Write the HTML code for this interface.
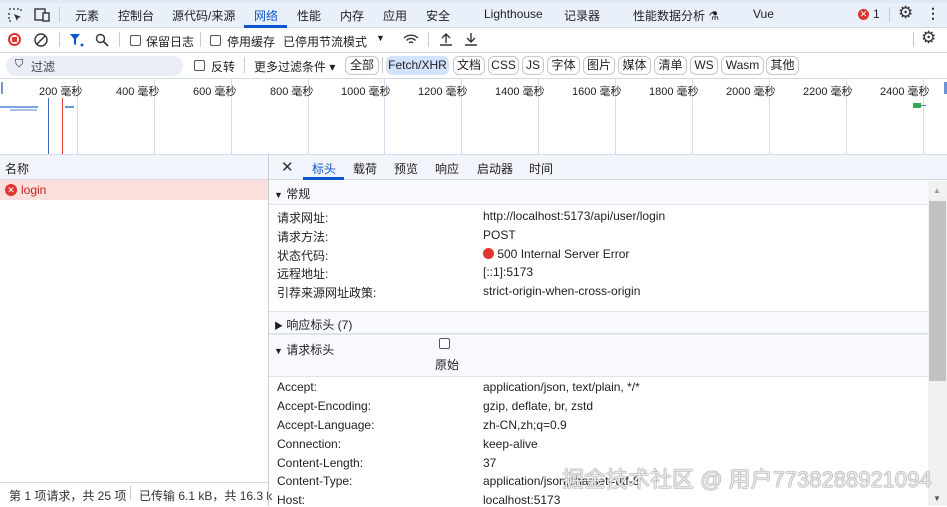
<!DOCTYPE html>
<html><head><meta charset="utf-8"><style>
*{box-sizing:border-box;margin:0;padding:0}
body{width:947px;height:506px;overflow:hidden;background:#fff;font-family:"Liberation Sans","Noto Sans CJK SC",sans-serif;font-size:12px;color:#1f1f1f;position:relative}
.a{position:absolute;white-space:nowrap}
.cb{position:absolute;width:11px;height:11px;border:1px solid #555;border-radius:2px;background:#fff}
.chip{position:absolute;top:56px;height:19px;border:1px solid #c4c7cc;border-radius:6px;line-height:17px;font-size:12px;text-align:center}
.g{position:absolute;top:78px;height:76px;width:1px;background:#d6dff0}
.tl{position:absolute;top:83px;font-size:11px}
.lb{position:absolute;left:277px}
.vl{position:absolute;left:483px}
</style></head><body>
<div class="a" style="left:0;top:0;width:947px;height:28px;background:#eaf0fa;border-bottom:1px solid #d3dbe8"></div>
<div class="a" style="left:0;top:0;width:947px;height:3px;background:#dfe8f7"></div>
<svg class="a" style="left:8px;top:8px" width="14" height="14"><path d="M1 1h2M5 1h2M1 5v2M1 9v2M1 13h2M9 1h2M13 1v2" stroke="#333" stroke-width="1.3" fill="none"/><path d="M6 6l7 3-3 1-1 3z" fill="#333"/></svg>
<svg class="a" style="left:34px;top:8px" width="16" height="14"><rect x="1" y="1" width="10" height="11" fill="none" stroke="#333" stroke-width="1.4"/><rect x="9" y="5" width="6" height="8" fill="#eaf0fa" stroke="#333" stroke-width="1.4"/></svg>
<div class="a" style="left:59px;top:7px;width:1px;height:15px;background:#c7ccd4"></div>
<div class="a" style="left:75px;top:7px">元素</div>
<div class="a" style="left:118px;top:7px">控制台</div>
<div class="a" style="left:172px;top:7px">源代码/来源</div>
<div class="a" style="left:254px;top:7px;color:#0b57d0">网络</div>
<div class="a" style="left:244px;top:25px;width:43px;height:3px;background:#0b57d0"></div>
<div class="a" style="left:297px;top:7px">性能</div>
<div class="a" style="left:340px;top:7px">内存</div>
<div class="a" style="left:383px;top:7px">应用</div>
<div class="a" style="left:426px;top:7px">安全</div>
<div class="a" style="left:484px;top:7px">Lighthouse</div>
<div class="a" style="left:564px;top:7px">记录器</div>
<div class="a" style="left:633px;top:7px">性能数据分析 ⚗</div>
<div class="a" style="left:753px;top:7px">Vue</div>
<div class="a" style="left:858px;top:9px;width:11px;height:11px;border-radius:50%;background:#dc362e;color:#fff;font-size:9px;line-height:11px;text-align:center">✕</div>
<div class="a" style="left:873px;top:7px">1</div>
<div class="a" style="left:889px;top:7px;width:1px;height:15px;background:#c7ccd4"></div>
<div class="a" style="left:898px;top:3px;font-size:17px;color:#333">⚙</div>
<div class="a" style="left:926px;top:5px;font-size:14px;font-weight:bold;color:#333">⋮</div>
<div class="a" style="left:0;top:52px;width:947px;height:1px;background:#d3dbe8"></div>
<div class="a" style="left:8px;top:33px;width:13px;height:13px;border-radius:50%;border:2px solid #dc362e"></div>
<div class="a" style="left:12px;top:37px;width:5px;height:5px;background:#dc362e"></div>
<svg class="a" style="left:34px;top:33px" width="14" height="14"><circle cx="7" cy="7" r="6" fill="none" stroke="#333" stroke-width="1.4"/><path d="M3 11L11 3" stroke="#333" stroke-width="1.4"/></svg>
<div class="a" style="left:59px;top:32px;width:1px;height:15px;background:#c7ccd4"></div>
<svg class="a" style="left:69px;top:33px" width="16" height="14"><path d="M1 1h10l-4 5v6l-2-1V6z" fill="#0b57d0"/><circle cx="13" cy="12" r="1.5" fill="#0b57d0"/></svg>
<svg class="a" style="left:95px;top:33px" width="14" height="14"><circle cx="5.5" cy="5.5" r="4" fill="none" stroke="#333" stroke-width="1.4"/><path d="M8.5 8.5L13 13" stroke="#333" stroke-width="1.6"/></svg>
<div class="a" style="left:119px;top:32px;width:1px;height:15px;background:#c7ccd4"></div>
<div class="cb" style="left:130px;top:35px"></div><div class="a" style="left:146px;top:33px">保留日志</div>
<div class="a" style="left:200px;top:32px;width:1px;height:15px;background:#c7ccd4"></div>
<div class="cb" style="left:210px;top:35px"></div><div class="a" style="left:227px;top:33px">停用缓存</div>
<div class="a" style="left:283px;top:33px">已停用节流模式</div>
<div class="a" style="left:376px;top:33px;font-size:9px">▼</div>
<svg class="a" style="left:403px;top:33px" width="16" height="13"><path d="M1 5a10 10 0 0 1 14 0M3.5 7.5a6 6 0 0 1 9 0M6 10a2.5 2.5 0 0 1 4 0" fill="none" stroke="#333" stroke-width="1.4"/></svg>
<div class="a" style="left:428px;top:32px;width:1px;height:15px;background:#c7ccd4"></div>
<svg class="a" style="left:439px;top:32px" width="14" height="14"><path d="M7 11V2M3 6l4-4 4 4M1 13h12" fill="none" stroke="#333" stroke-width="1.4"/></svg>
<svg class="a" style="left:464px;top:32px" width="14" height="14"><path d="M7 1v9M3 6l4 4 4-4M1 13h12" fill="none" stroke="#333" stroke-width="1.4"/></svg>
<div class="a" style="left:913px;top:32px;width:1px;height:15px;background:#c7ccd4"></div>
<div class="a" style="left:921px;top:28px;font-size:17px;color:#333">⚙</div>
<div class="a" style="left:0;top:78px;width:947px;height:1px;background:#d3dbe8"></div>
<div class="a" style="left:6px;top:56px;width:177px;height:20px;border-radius:10px;background:#e9eef6"></div>
<div class="a" style="left:15px;top:58px;font-size:11px">⛉</div>
<div class="a" style="left:31px;top:58px;color:#444">过滤</div>
<div class="cb" style="left:194px;top:60px"></div><div class="a" style="left:211px;top:58px">反转</div>
<div class="a" style="left:244px;top:57px;width:1px;height:16px;background:#c7ccd4"></div>
<div class="a" style="left:254px;top:58px">更多过滤条件 ▾</div>
<div class="chip" style="left:345px;width:34px">全部</div>
<div class="a" style="left:382px;top:57px;width:1px;height:16px;background:#c7ccd4"></div>
<div class="chip" style="left:386px;width:63px;background:#d3e3fd;border-color:#d3e3fd">Fetch/XHR</div>
<div class="chip" style="left:453px;width:32px">文档</div>
<div class="chip" style="left:488px;width:31px">CSS</div>
<div class="chip" style="left:522px;width:22px">JS</div>
<div class="chip" style="left:547px;width:33px">字体</div>
<div class="chip" style="left:583px;width:32px">图片</div>
<div class="chip" style="left:618px;width:33px">媒体</div>
<div class="chip" style="left:654px;width:33px">清单</div>
<div class="chip" style="left:690px;width:28px">WS</div>
<div class="chip" style="left:721px;width:43px">Wasm</div>
<div class="chip" style="left:766px;width:33px">其他</div>
<div class="a" style="left:0;top:154px;width:947px;height:1px;background:#d3dbe8"></div>
<div class="g" style="left:77px"></div><div class="g" style="left:154px"></div><div class="g" style="left:231px"></div><div class="g" style="left:308px"></div><div class="g" style="left:384px"></div><div class="g" style="left:461px"></div><div class="g" style="left:538px"></div><div class="g" style="left:615px"></div><div class="g" style="left:692px"></div><div class="g" style="left:769px"></div><div class="g" style="left:846px"></div><div class="g" style="left:923px"></div>
<div class="tl" style="left:39px">200 毫秒</div><div class="tl" style="left:116px">400 毫秒</div><div class="tl" style="left:193px">600 毫秒</div><div class="tl" style="left:270px">800 毫秒</div><div class="tl" style="left:341px">1000 毫秒</div><div class="tl" style="left:418px">1200 毫秒</div><div class="tl" style="left:495px">1400 毫秒</div><div class="tl" style="left:572px">1600 毫秒</div><div class="tl" style="left:649px">1800 毫秒</div><div class="tl" style="left:726px">2000 毫秒</div><div class="tl" style="left:803px">2200 毫秒</div><div class="tl" style="left:880px">2400 毫秒</div>
<div class="a" style="left:1px;top:82px;width:2px;height:12px;background:#6c93d8"></div>
<div class="a" style="left:0;top:106px;width:38px;height:2px;background:#7ba3e6"></div>
<div class="a" style="left:10px;top:109px;width:27px;height:2px;background:#a8c2ee"></div>
<div class="a" style="left:48px;top:98px;width:1px;height:56px;background:#3e6bbd"></div>
<div class="a" style="left:62px;top:98px;width:1px;height:56px;background:#d9453b"></div>
<div class="a" style="left:65px;top:106px;width:9px;height:2px;background:#6c93d8"></div>
<div class="a" style="left:913px;top:103px;width:8px;height:5px;background:#34a853"></div>
<div class="a" style="left:921px;top:105px;width:5px;height:1px;background:#4a86e8"></div>
<div class="a" style="left:944px;top:82px;width:3px;height:12px;background:#6c93d8"></div>
<div class="a" style="left:0;top:155px;width:268px;height:25px;background:#f1f4fa;border-bottom:1px solid #d3dbe8"></div>
<div class="a" style="left:5px;top:160px">名称</div>
<div class="a" style="left:0;top:180px;width:268px;height:20px;background:#fce0de"></div>
<div class="a" style="left:5px;top:184px;width:12px;height:12px;border-radius:50%;background:#dc362e;color:#fff;font-size:9px;line-height:12px;text-align:center">✕</div>
<div class="a" style="left:21px;top:183px;color:#c5221f">login</div>
<div class="a" style="left:0;top:482px;width:268px;height:1px;background:#d3dbe8"></div>
<div class="a" style="left:9px;top:487px;color:#333">第 1 项请求，共 25 项</div>
<div class="a" style="left:130px;top:486px;width:1px;height:14px;background:#c7ccd4"></div>
<div class="a" style="left:139px;top:487px;color:#333">已传输 6.1 kB，共 16.3 k</div>
<div class="a" style="left:268px;top:155px;width:1px;height:351px;background:#c7ccd4"></div>
<div class="a" style="left:269px;top:155px;width:678px;height:25px;background:#f1f4fa;border-bottom:1px solid #d3dbe8"></div>
<div class="a" style="left:281px;top:158px;font-size:15px;color:#333">✕</div>
<div class="a" style="left:312px;top:160px;color:#0b57d0">标头</div>
<div class="a" style="left:303px;top:177px;width:41px;height:3px;background:#0b57d0"></div>
<div class="a" style="left:353px;top:160px">载荷</div>
<div class="a" style="left:394px;top:160px">预览</div>
<div class="a" style="left:435px;top:160px">响应</div>
<div class="a" style="left:477px;top:160px">启动器</div>
<div class="a" style="left:529px;top:160px">时间</div>
<div class="a" style="left:269px;top:181px;width:659px;height:24px;background:#f8f9fc;border-bottom:1px solid #dde3ee"></div>
<div class="a" style="left:274px;top:185px"><span style="font-size:9px">▼</span> 常规</div>
<div class="lb" style="top:209px">请求网址:</div><div class="vl" style="top:209px">http://localhost:5173/api/user/login</div>
<div class="lb" style="top:228px">请求方法:</div><div class="vl" style="top:228px">POST</div>
<div class="lb" style="top:247px">状态代码:</div><div class="vl" style="top:247px"><span style="display:inline-block;width:11px;height:11px;border-radius:50%;background:#dc362e;vertical-align:-1px"></span> 500 Internal Server Error</div>
<div class="lb" style="top:265px">远程地址:</div><div class="vl" style="top:265px">[::1]:5173</div>
<div class="lb" style="top:284px">引荐来源网址政策:</div><div class="vl" style="top:284px">strict-origin-when-cross-origin</div>
<div class="a" style="left:269px;top:311px;width:659px;height:24px;background:#f8f9fc;border-top:1px solid #dde3ee;border-bottom:2px solid #dde3ee"></div>
<div class="a" style="left:274px;top:316px"><span style="font-size:9px">▶</span> 响应标头 (7)</div>
<div class="a" style="left:269px;top:336px;width:659px;height:41px;background:#f8f9fc;border-bottom:1px solid #dde3ee"></div>
<div class="a" style="left:274px;top:341px"><span style="font-size:9px">▼</span> 请求标头</div>
<div class="cb" style="left:439px;top:338px"></div>
<div class="a" style="left:435px;top:356px">原始</div>
<div class="lb" style="top:380px">Accept:</div><div class="vl" style="top:380px">application/json, text/plain, */*</div>
<div class="lb" style="top:399px">Accept-Encoding:</div><div class="vl" style="top:399px">gzip, deflate, br, zstd</div>
<div class="lb" style="top:418px">Accept-Language:</div><div class="vl" style="top:418px">zh-CN,zh;q=0.9</div>
<div class="lb" style="top:437px">Connection:</div><div class="vl" style="top:437px">keep-alive</div>
<div class="lb" style="top:456px">Content-Length:</div><div class="vl" style="top:456px">37</div>
<div class="lb" style="top:474px">Content-Type:</div><div class="vl" style="top:474px">application/json;charset=utf-8</div>
<div class="lb" style="top:493px">Host:</div><div class="vl" style="top:493px">localhost:5173</div>
<div class="a" style="left:928px;top:181px;width:19px;height:325px;background:#f1f1f1"></div>
<div class="a" style="left:933px;top:186px;font-size:8px;color:#999">▲</div>
<div class="a" style="left:929px;top:201px;width:17px;height:180px;background:#c1c1c1"></div>
<div class="a" style="left:933px;top:494px;font-size:8px;color:#555">▼</div>
<div class="a" style="left:562px;top:462px;font-size:22px;color:rgba(255,255,255,.85);text-shadow:0 0 1px #666,0 0 1px #666">掘金技术社区 @ 用户7738288921094</div>
</body></html>
